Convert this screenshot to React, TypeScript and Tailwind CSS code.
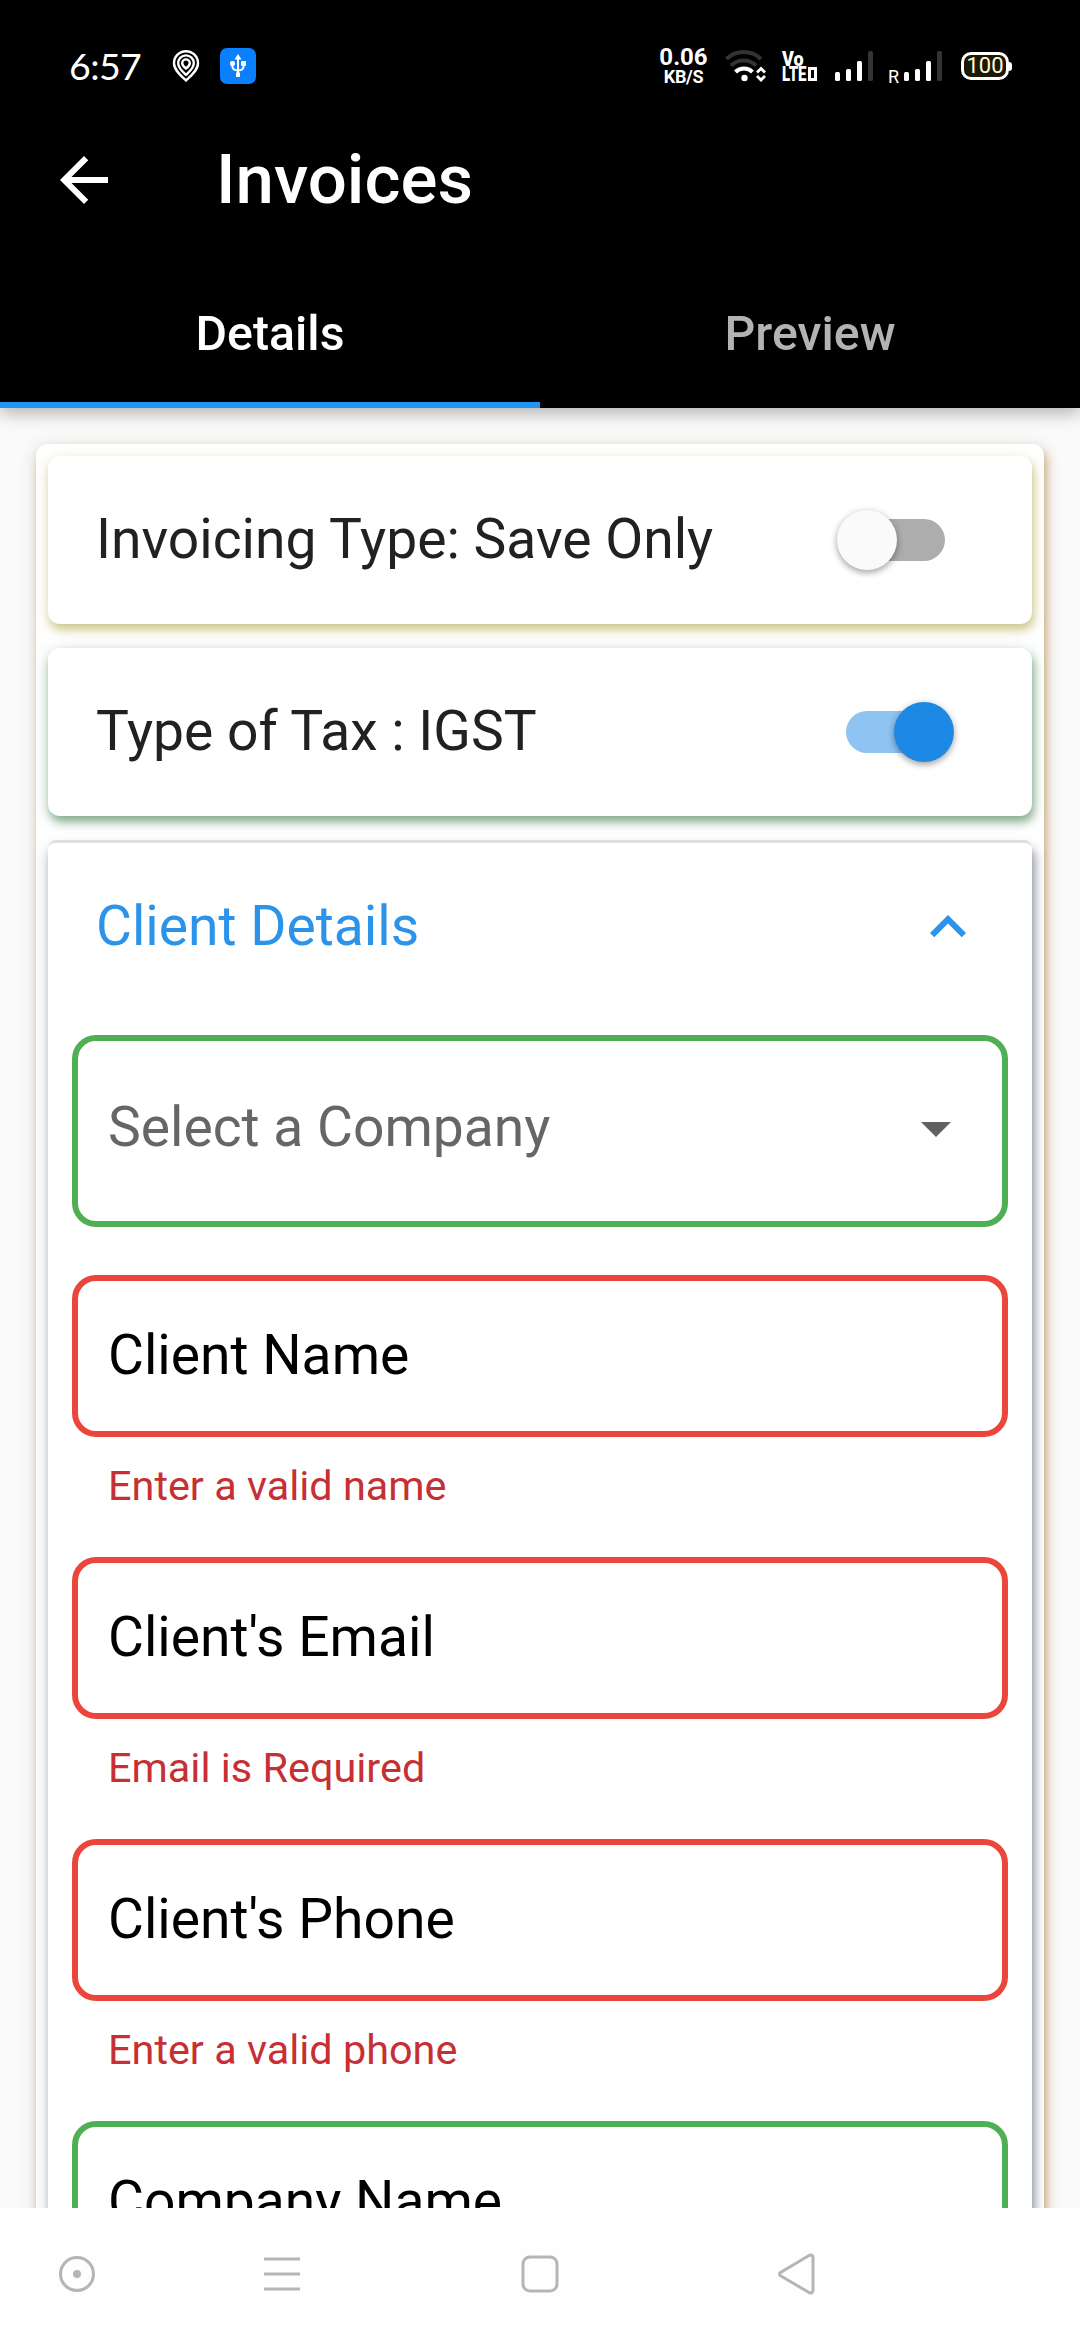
import React from "react";

function SignalBars() {
  return (
    <svg className="mt-[48px] shrink-0" width="40" height="36" viewBox="0 0 40 36" fill="#fff">
      <rect x="0" y="24" width="5" height="9" rx="1.500" />
      <rect x="11" y="21" width="5" height="12" rx="1.500" />
      <rect x="22" y="13" width="5" height="20" rx="1.500" />
      <rect x="33" y="3" width="5" height="30" rx="1.500" fill="#333" />
    </svg>
  );
}

function StatusBar() {
  return (
    <div className="flex h-[132px] w-full items-start text-white">
      <div className="ml-[69px] mt-[45px] h-[42px] w-[74px] shrink-0 whitespace-nowrap font-[Lato,sans-serif] text-[37.500px] leading-[42px] tracking-[-0.6px]">6:57</div>
      <svg className="ml-[28px] mt-[48px] shrink-0" width="30" height="36" viewBox="0 0 30 36" fill="none" stroke="#fff" strokeWidth="2.400" strokeLinejoin="round">
        <path d="M15 32.500C10 28 3 22 3 15.200A12 12 0 0 1 27 15.200C27 22 20 28 15 32.500Z" />
        <path d="M15 27C11.500 23.500 7.200 20 7.200 15.200A7.800 7.800 0 0 1 22.800 15.200C22.800 20 18.500 23.500 15 27Z" />
        <path d="M15 20.500C13 19 11.200 17.500 11.200 15.200A3.800 3.800 0 0 1 18.800 15.200C18.800 17.500 17 19 15 20.500Z" />
      </svg>
      <div className="ml-[19px] mt-[48px] flex size-[36px] shrink-0 items-center justify-center rounded-[7px] bg-[#0a80ff]">
        <svg width="18" height="24" viewBox="0 0 18 24" fill="#fff">
          <path d="M9 0l3.500 5.500h-7z" />
          <rect x="8" y="4" width="2" height="17" />
          <rect x="7" y="18.500" width="4" height="4.500" />
          <rect x="1" y="7" width="5" height="5" rx="2" />
          <rect x="12" y="7" width="5" height="5" rx="1" />
          <path d="M3.200 11c0 4 2 5.500 5.800 5.500s5.800-1.500 5.800-5.500" fill="none" stroke="#fff" strokeWidth="2" />
        </svg>
      </div>
      <div className="ml-[402px] mt-[47px] flex w-[51px] shrink-0 flex-col items-center font-[Roboto,sans-serif] font-bold">
        <span className="text-[24px] leading-[21px]">0.06</span>
        <span className="text-[18px] leading-[18px] tracking-[-0.3px]">KB/S</span>
      </div>
      <svg className="ml-[16px] mt-[48px] shrink-0" width="42" height="36" viewBox="0 0 42 36" fill="none" strokeWidth="4">
        <path d="M1.500 11A25 25 0 0 1 36 11" stroke="#333" />
        <path d="M6 17.500A18 18 0 0 1 31 17.500" stroke="#333" />
        <path d="M10.500 24A12 12 0 0 1 27.500 24" stroke="#fff" />
        <circle cx="19.500" cy="30" r="3.200" fill="#fff" />
        <path d="M32 24.500l4-4 4 4M32 28l4 4 4-4" stroke="#fff" strokeWidth="2.800" />
      </svg>
      <div className="ml-[15px] mt-[51px] flex w-[36px] shrink-0 flex-col font-[Roboto,sans-serif] font-black">
        <span className="block origin-left scale-x-90 text-[20px] leading-[16px]">Vo</span>
        <span className="flex items-center text-[20px] leading-[14px]">
          <span className="block w-[26px] origin-left scale-x-75">LTE</span>
          <span className="block h-[14px] w-[9px] border-[3px] border-white" />
        </span>
      </div>
      <div className="ml-[17px] flex shrink-0 items-start">
        <SignalBars />
        <span className="ml-[13px] mt-[66px] w-[16px] font-[Roboto,sans-serif] text-[18px] leading-[21px]">R</span>
        <SignalBars />
      </div>
      <div className="ml-[17px] mt-[52px] flex shrink-0 items-center">
        <div className="flex h-[28px] w-[48px] items-center justify-center rounded-[10px] border-[3px] border-white bg-[#1d1806] font-[Roboto,sans-serif] text-[22px] leading-[22px] text-[#fff8d8]">100</div>
        <div className="h-[9px] w-[3px] rounded-r-[3px] bg-white" />
      </div>
    </div>
  );
}

function Toggle({ on }: { on: boolean }) {
  return on ? (
    <div className="mr-[78px] flex h-[42px] w-[108px] items-center">
      <div className="h-[42px] w-[99px] shrink-0 rounded-full bg-[#8fc3f2]" />
      <div className="-ml-[51px] size-[60px] shrink-0 rounded-full bg-[#1e88e5] shadow-[0_3px_6px_rgba(0,0,0,0.28),0_1px_9px_rgba(0,0,0,0.12)]" />
    </div>
  ) : (
    <div className="mr-[87px] flex h-[42px] w-[108px] items-center">
      <div className="z-10 size-[60px] shrink-0 rounded-full bg-[#fafafa] shadow-[0_3px_6px_rgba(0,0,0,0.28),0_1px_9px_rgba(0,0,0,0.12)]" />
      <div className="-ml-[51px] h-[42px] w-[99px] shrink-0 rounded-full bg-[#adadad]" />
    </div>
  );
}

function Field({ label, error }: { label: string; error?: string }) {
  return (
    <div className="h-[282px]">
      <div className={error ? "flex h-[162px] items-center rounded-[24px] border-[6px] border-[#ea463b] pb-[2px] pl-[30px]" : "flex h-[162px] items-center rounded-[24px] border-[6px] border-[#50ae54] pb-[2px] pl-[30px]"}>
        <span className="whitespace-nowrap text-[55.200px] leading-[64px] text-black">{label}</span>
      </div>
      {error && <div className="pl-[36px] pt-[24px] text-[41.400px] leading-[50px] text-[#c62f33]">{error}</div>}
    </div>
  );
}

export default function App() {
  return (
    <div className="flex h-[2340px] w-[1080px] flex-col overflow-hidden bg-[#fafafa] font-[Roboto,sans-serif]">
      <header className="z-10 h-[408px] shrink-0 bg-black shadow-[0_6px_15px_rgba(0,0,0,0.22),0_3px_24px_rgba(0,0,0,0.08)]">
        <StatusBar />
        <div className="flex h-[96px] items-center">
          <svg className="ml-[48px]" width="72" height="72" viewBox="0 0 24 24" fill="#fff"><path d="M20 11H7.830l5.590-5.590L12 4l-8 8 8 8 1.410-1.410L7.830 13H20v-2z" /></svg>
          <h1 className="ml-[96px] text-[69px] font-medium leading-[80px] text-white">Invoices</h1>
        </div>
        <div className="mt-[36px] grid h-[144px] grid-cols-2 text-center text-[48.300px] font-medium">
          <div className="border-b-[6px] border-[#2196f3] pt-[31px] leading-[78px] text-white">Details</div>
          <div className="pt-[31px] leading-[78px] text-[#b3b3b3]">Preview</div>
        </div>
      </header>
      <main className="min-h-0 flex-1 overflow-hidden px-[36px] pt-[36px]">
        <div className="flex h-[2100px] flex-col gap-[24px] rounded-[12px] bg-white px-[12px] pt-[12px] shadow-[3px_6px_9px_rgba(170,110,10,0.42),0_3px_18px_rgba(110,80,40,0.20)]">
          <section className="flex h-[168px] shrink-0 items-center justify-between rounded-[12px] bg-white pl-[48px] shadow-[2px_6px_9px_rgba(160,150,30,0.42),0_3px_16px_rgba(160,150,50,0.20)]">
            <span className="-mt-[2px] whitespace-nowrap text-[55.200px] leading-[64px] text-[#212121]">Invoicing Type: Save Only</span>
            <Toggle on={false} />
          </section>
          <section className="flex h-[168px] shrink-0 items-center justify-between rounded-[12px] bg-white pl-[48px] shadow-[2px_6px_9px_rgba(30,100,40,0.44),0_3px_16px_rgba(30,110,60,0.22)]">
            <span className="-mt-[2px] whitespace-nowrap text-[55.200px] leading-[64px] text-[#212121]">Type of Tax : IGST</span>
            <Toggle on />
          </section>
          <section className="flex-1 rounded-t-[8px] border-t-[3px] border-[#dfdfdf] bg-white px-[24px] shadow-[3px_9px_9px_rgba(40,50,60,0.38),0_9px_16px_rgba(50,80,100,0.26)]">
            <div className="flex h-[168px] items-center justify-between px-[24px]">
              <span className="-mt-[2px] text-[55.200px] leading-[64px] text-[#2b94ea]">Client Details</span>
              <svg width="72" height="72" viewBox="0 0 24 24" fill="#2b94ea"><path d="M12 8l-6 6 1.410 1.410L12 10.830l4.590 4.580L18 14z" /></svg>
            </div>
            <div className="mt-[24px] flex h-[192px] items-center justify-between rounded-[24px] border-[6px] border-[#50ae54] px-[30px] pb-[6px]">
              <span className="-mt-[2px] text-[55.200px] leading-[64px] text-[#666]">Select a Company</span>
              <svg width="72" height="72" viewBox="0 0 24 24" fill="#616161"><path d="M7 10l5 5 5-5z" /></svg>
            </div>
            <div className="mt-[48px]">
              <Field label="Client Name" error="Enter a valid name" />
              <Field label="Client's Email" error="Email is Required" />
              <Field label="Client's Phone" error="Enter a valid phone" />
              <Field label="Company Name" />
            </div>
          </section>
        </div>
      </main>
      <nav className="z-10 flex h-[132px] shrink-0 items-center bg-[#fefefe]">
        <svg className="ml-[56px]" width="42" height="42" viewBox="0 0 42 42" fill="none" stroke="#b5b5b5" strokeWidth="3"><circle cx="21" cy="21" r="16.500" /><circle cx="21" cy="21" r="4" fill="#b5b5b5" stroke="none" /></svg>
        <svg className="ml-[163px]" width="42" height="42" viewBox="0 0 42 42" stroke="#b5b5b5" strokeWidth="3"><path d="M3 6H39M3 21H39M3 36H39" /></svg>
        <svg className="ml-[216px]" width="42" height="42" viewBox="0 0 42 42" fill="none" stroke="#b5b5b5" strokeWidth="3"><rect x="4" y="4" width="34" height="34" rx="7" /></svg>
        <svg className="ml-[215px]" width="42" height="42" viewBox="0 0 42 42" fill="none" stroke="#b5b5b5" strokeWidth="3" strokeLinejoin="round"><path d="M4.500 19.500Q2.500 21 4.500 22.800L33 39.500Q37 41 37 37V5Q37 1 33 2.500Z" /></svg>
      </nav>
    </div>
  );
}
